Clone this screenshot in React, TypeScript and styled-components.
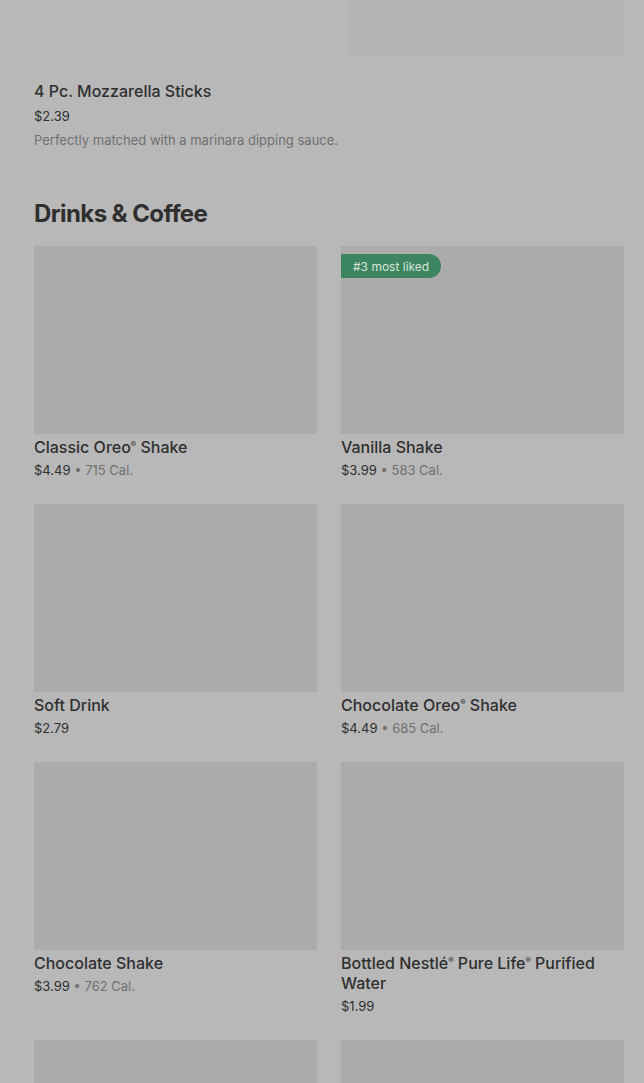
import React, { FC } from 'react';
import styled, { createGlobalStyle } from 'styled-components';

const GlobalStyle = createGlobalStyle`
  html, body {
    margin: 0;
    padding: 0;
    background: #b8b8b8;
    font-family: Inter, "Noto Sans", "Liberation Sans", sans-serif;
    color: #2f2f2f;
  }
`;

const Page = styled.div`
  width: 644px;
  height: 1083px;
  overflow: hidden;
  padding: 0 20px 0 34px;
  box-sizing: border-box;
`;

const TopRow = styled.div`
  display: flex;
  justify-content: flex-end;
`;

const TopImage = styled.div`
  width: 275px;
  height: 55px;
  background: #b4b4b4;
  border-radius: 0 0 2px 2px;
`;

const ListItem = styled.div`
  padding-top: 26px;
  display: flex;
  flex-direction: column;
`;

const ItemTitle = styled.div`
  font-size: 16px;
  line-height: 20px;
  font-weight: 500;
  color: #2f2f2f;
`;

const ItemPrice = styled.div`
  font-size: 13px;
  line-height: 20px;
  color: #2f2f2f;
  margin-top: 5px;
`;

const ItemDesc = styled.div`
  font-size: 13px;
  line-height: 20px;
  color: #707070;
  margin-top: 4px;
`;

const SectionTitle = styled.h2`
  margin: 49px 0 17px;
  font-size: 24px;
  line-height: 30px;
  font-weight: 700;
  letter-spacing: -0.6px;
  color: #2f2f2f;
`;

const Grid = styled.div`
  display: grid;
  grid-template-columns: 283px 283px;
  column-gap: 24px;
  row-gap: 24px;
`;

const Card = styled.div`
  display: flex;
  flex-direction: column;
`;

const Photo = styled.div`
  position: relative;
  height: 188px;
  background: #ababab;
  margin-bottom: 3px;
`;

const Badge = styled.span`
  position: absolute;
  left: 0;
  top: 8px;
  height: 24px;
  padding: 0 12px;
  display: flex;
  align-items: center;
  background: #3d8560;
  color: #d8e6dd;
  font-size: 12px;
  border-radius: 0 12px 12px 0;
`;

const Meta = styled.div`
  font-size: 13px;
  line-height: 20px;
  color: #2f2f2f;
  margin-top: 3px;
`;

const Cal = styled.span`
  color: #707070;
`;

const Reg = styled.span`
  font-size: 8px;
  line-height: 0;
  vertical-align: 6px;
`;

interface Drink {
  name: React.ReactNode;
  price: string;
  cal?: string;
  badge?: string;
}

const R = () => <Reg>®</Reg>;

const drinks: Drink[] = [
  { name: <>Classic Oreo<R /> Shake</>, price: '$4.49', cal: '715 Cal.' },
  { name: 'Vanilla Shake', price: '$3.99', cal: '583 Cal.', badge: '#3 most liked' },
  { name: 'Soft Drink', price: '$2.79' },
  { name: <>Chocolate Oreo<R /> Shake</>, price: '$4.49', cal: '685 Cal.' },
  { name: 'Chocolate Shake', price: '$3.99', cal: '762 Cal.' },
  { name: <>Bottled Nestlé<R /> Pure Life<R /> Purified Water</>, price: '$1.99' },
  { name: '', price: '' },
  { name: '', price: '' },
];

const DrinkCard: FC<{ drink: Drink }> = ({ drink }) => (
  <Card>
    <Photo>{drink.badge && <Badge>{drink.badge}</Badge>}</Photo>
    <ItemTitle>{drink.name}</ItemTitle>
    <Meta>
      {drink.price}
      {drink.cal && <Cal> • {drink.cal}</Cal>}
    </Meta>
  </Card>
);

export default function App() {
  return (
    <>
      <GlobalStyle />
      <Page>
        <TopRow>
          <TopImage />
        </TopRow>
        <ListItem>
          <ItemTitle>4 Pc. Mozzarella Sticks</ItemTitle>
          <ItemPrice>$2.39</ItemPrice>
          <ItemDesc>Perfectly matched with a marinara dipping sauce.</ItemDesc>
        </ListItem>
        <SectionTitle>Drinks &amp; Coffee</SectionTitle>
        <Grid>
          {drinks.map((d, i) => (
            <DrinkCard drink={d} key={i} />
          ))}
        </Grid>
      </Page>
    </>
  );
}
